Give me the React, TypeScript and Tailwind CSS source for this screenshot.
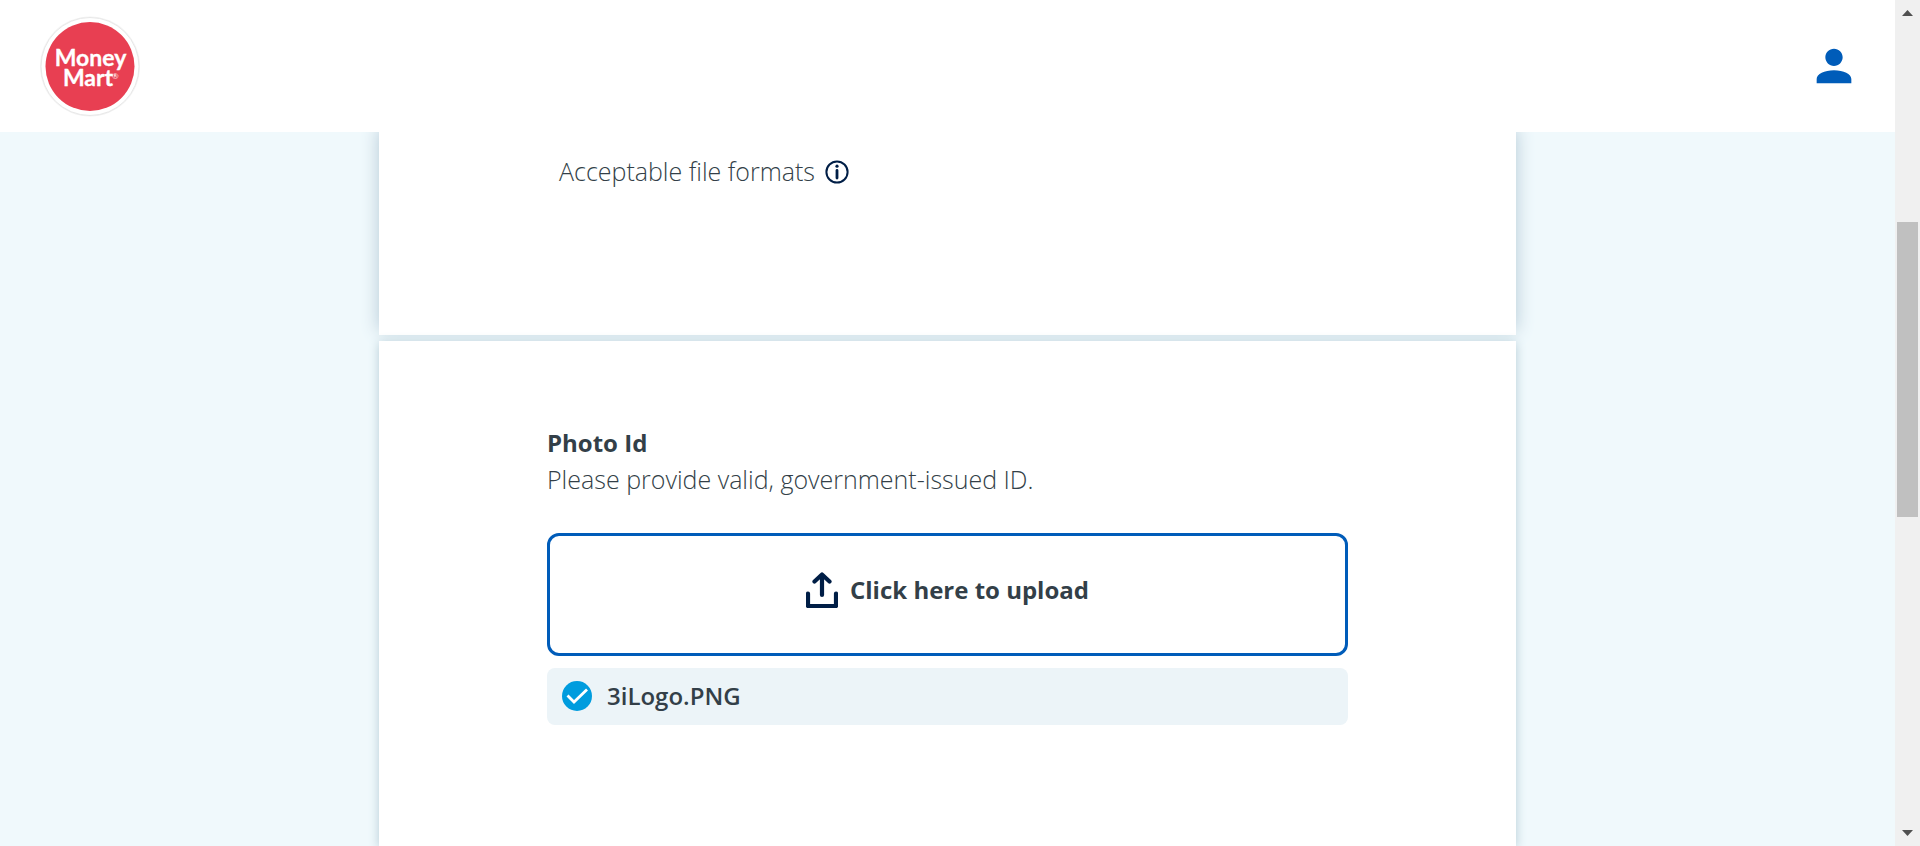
import { useId } from "react";

function Logo() {
  return (
    <svg className="size-[104px]" viewBox="0 0 104 104" role="img" aria-label="Money Mart">
      <circle cx="52" cy="52.500" r="50" fill="#f3f3f3" />
      <circle cx="52" cy="52.500" r="49" fill="#fff" stroke="#e8e8e8" strokeWidth="1" />
      <circle cx="52" cy="52.500" r="44.500" fill="#e83f52" />
      <g fill="#fff" fontFamily="Lato, 'Open Sans', sans-serif" fontWeight="700">
        <text x="52.500" y="52" fontSize="23" textAnchor="middle" stroke="#fff" strokeWidth="0.300">Money</text>
        <text x="50" y="72" fontSize="23" textAnchor="middle" stroke="#fff" strokeWidth="0.300">Mart</text>
        <text x="74" y="65" fontSize="8" fontWeight="400">®</text>
      </g>
    </svg>
  );
}

function Header() {
  return (
    <header className="relative z-20 flex h-[132px] shrink-0 items-center justify-between bg-white pr-[35px] pl-[38px]">
      <a href="#home">
        <Logo />
      </a>
      <button type="button" aria-label="Account" className="text-[#005cb9]">
        <svg className="size-[52px]" viewBox="0 0 24 24" fill="currentColor">
          <path d="M12 12c2.210 0 4-1.790 4-4s-1.790-4-4-4-4 1.790-4 4 1.790 4 4 4zm0 2c-4.420 0-8 1.790-8 4v2h16v-2c0-2.210-3.580-4-8-4z" />
        </svg>
      </button>
    </header>
  );
}

function InfoIcon() {
  return (
    <svg className="size-6" viewBox="0 0 24 24" fill="none" stroke="#001e46">
      <circle cx="12" cy="12" r="10.600" strokeWidth="2" />
      <path d="M12 10.500v7.500" strokeWidth="2.800" strokeLinecap="round" />
      <circle cx="12" cy="6.200" r="1.600" fill="#001e46" stroke="none" />
    </svg>
  );
}

function UploadIcon() {
  return (
    <svg className="h-9 w-8" viewBox="0 0 32 36" fill="none" stroke="#001e46" strokeWidth="4.200" strokeLinecap="round" strokeLinejoin="round">
      <path d="M16 23V3M8.500 9.500L16 2.500l7.500 7" />
      <path d="M2 21.500V34h28V21.500" />
    </svg>
  );
}

function CheckIcon() {
  return (
    <svg className="size-[30px]" viewBox="0 0 30 30" fill="none">
      <circle cx="15" cy="15" r="15" fill="#009cde" />
      <path d="M5.500 14.500l6.500 6.500L25 8.500" stroke="#fff" strokeWidth="2.800" />
    </svg>
  );
}

function ScrollTrack() {
  return (
    <div aria-hidden="true" className="flex w-[25px] shrink-0 flex-col items-center bg-[#f0f0f0] py-[10px]">
      <svg className="h-[6px] w-[11px]" viewBox="0 0 11 6" fill="#505050">
        <path d="M5.500 0L11 6H0z" />
      </svg>
      <div className="flex w-[21px] flex-1 flex-col">
        <div className="flex-[206]" />
        <div className="flex-[295] bg-[#c0c0c0]" />
        <div className="flex-[313]" />
      </div>
      <svg className="h-[6px] w-[11px]" viewBox="0 0 11 6" fill="#505050">
        <path d="M5.500 6L0 0h11z" />
      </svg>
    </div>
  );
}

export default function App() {
  const id = useId();
  return (
    <div className="flex h-screen overflow-hidden font-['Open_Sans','Noto_Sans',sans-serif] text-2xl text-[#333f48]">
      <div className="flex min-w-0 flex-1 flex-col">
        <Header />
        <main className="flex flex-1 flex-col items-center gap-[6px] overflow-hidden bg-[#f0f9fc]">
          <section className="relative z-10 w-[60%] bg-white px-[180px] pt-[21px] pb-[146px] shadow-[0_-4px_17px_#b4c9d6]">
            <div className="flex items-center gap-[10px]">
              <span className="text-[25px] leading-9 font-light">Acceptable file formats</span>
              <button type="button" aria-label="About acceptable file formats" className="pt-px">
                <InfoIcon />
              </button>
            </div>
          </section>
          <section className="relative z-10 w-[60%] flex-1 bg-white px-[168px] pt-[84px] shadow-[0_2px_10px_#b4cbd5]">
            <h2 className="leading-9 font-bold">Photo Id</h2>
            <p className="text-[25px] leading-9 font-light">Please provide valid, government-issued ID.</p>
            <label
              htmlFor={id}
              className="mt-9 flex h-[123px] cursor-pointer items-center justify-center gap-3 rounded-xl border-[3px] border-[#005cb9] pb-[10px] font-bold"
            >
              <UploadIcon />
              Click here to upload
            </label>
            <input id={id} type="file" className="sr-only" />
            <div className="mt-3 flex h-[57px] items-center gap-[15px] rounded-lg bg-[#ecf4f8] px-[15px] pb-[2px] font-semibold">
              <CheckIcon />
              <span>3iLogo.PNG</span>
            </div>
          </section>
        </main>
      </div>
      <ScrollTrack />
    </div>
  );
}
